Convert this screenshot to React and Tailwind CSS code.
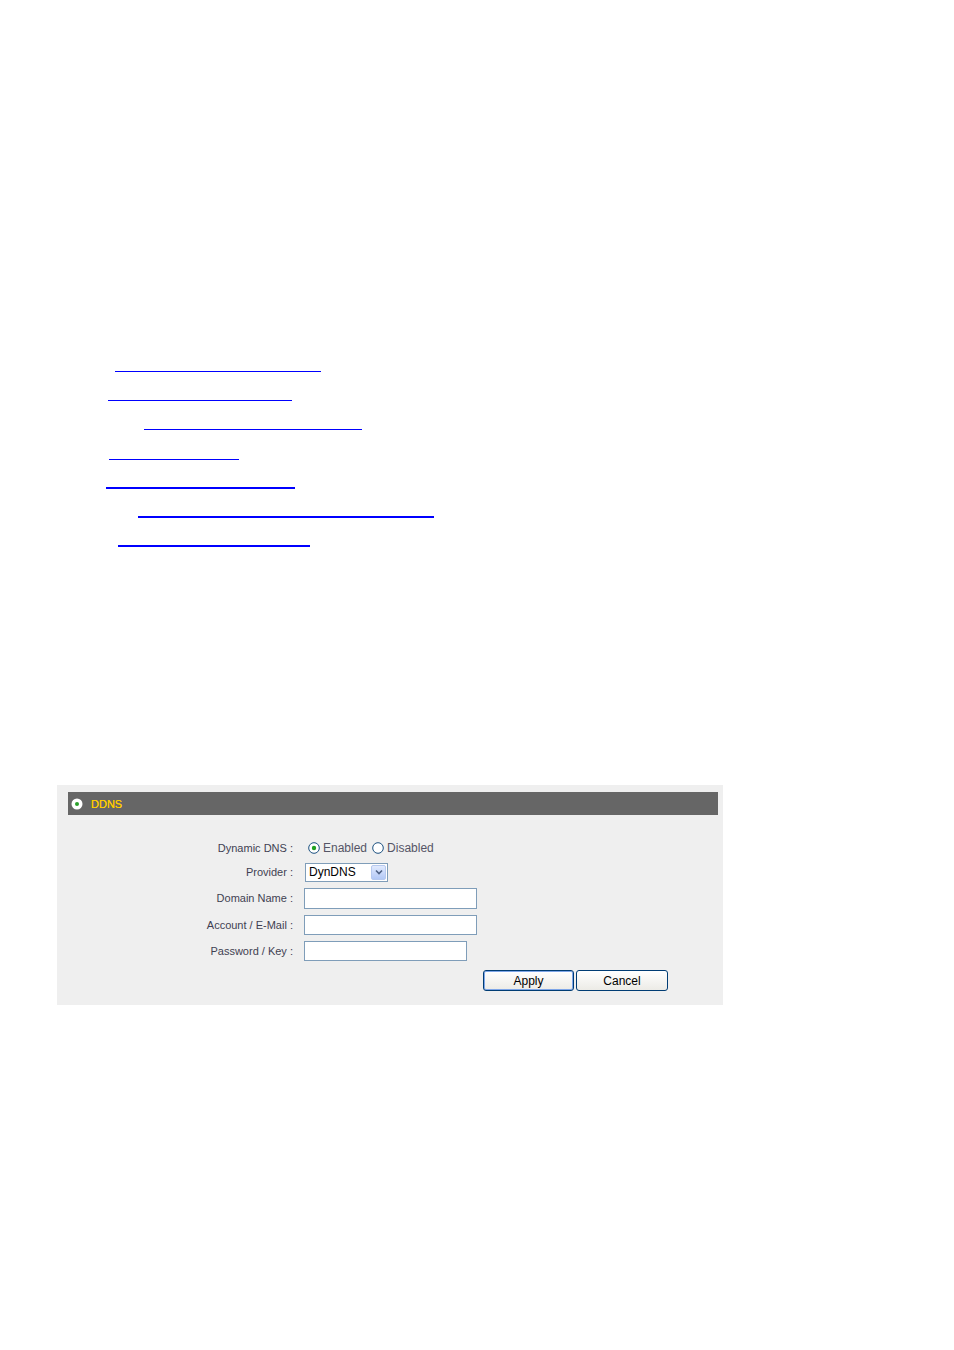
import React from "react";

const lines = [
  { ml: "ml-[115px]", w: "w-[206px]", mt: "mt-[371px]", h: "h-px" },
  { ml: "ml-[108px]", w: "w-[184px]", mt: "mt-[28px]", h: "h-px" },
  { ml: "ml-[144px]", w: "w-[218px]", mt: "mt-[28px]", h: "h-px" },
  { ml: "ml-[109px]", w: "w-[130px]", mt: "mt-[29px]", h: "h-px" },
  { ml: "ml-[106px]", w: "w-[189px]", mt: "mt-[27px]", h: "h-[2px]" },
  { ml: "ml-[138px]", w: "w-[296px]", mt: "mt-[27px]", h: "h-[2px]" },
  { ml: "ml-[118px]", w: "w-[192px]", mt: "mt-[27px]", h: "h-[2px]" },
];

const Radio = ({ checked }) => (
  <svg width="12" height="12" viewBox="0 0 12 12" className="shrink-0">
    <circle cx="6" cy="6" r="5.3" fill="#fff" stroke="#1c5180" strokeWidth="1" />
    {checked && <circle cx="6" cy="6" r="2.2" fill="#21a121" />}
  </svg>
);

const Row = ({ label, mt, h, children }) => (
  <div className={`flex items-center ${mt} ${h}`}>
    <div className="w-[237px] shrink-0 pr-[1px] text-right text-[11px] text-[#3f3f52]">
      {label}
    </div>
    <div className="ml-[10px] flex items-center">{children}</div>
  </div>
);

const TextBox = ({ w, h }) => (
  <div className={`${w} ${h} border border-[#7f9db9] bg-white`} />
);

export default function App() {
  return (
    <div
      className="w-[954px] h-[1350px] bg-white flex flex-col"
      style={{ fontFamily: '"Liberation Sans", Arial, sans-serif' }}
    >
      {lines.map((l, i) => (
        <div key={i} className={`${l.ml} ${l.w} ${l.mt} ${l.h} bg-[#0000ff]`} />
      ))}

      <div className="ml-[57px] mt-[238px] w-[666px] h-[220px] bg-[#efefef] pt-[7px] pl-[11px] pr-[5px]">
        <div className="h-[23px] bg-[#666666] flex items-center pl-[3px]">
          <svg width="12" height="12" viewBox="0 0 12 12">
            <circle cx="6" cy="6" r="5.5" fill="#fff" />
            <circle cx="6" cy="6" r="2" fill="#2aa02a" />
          </svg>
          <span className="ml-[8px] text-[11px] text-[#ffcc00] leading-none mt-[1px] [text-shadow:0_0_0.4px_#ffcc00]">
            DDNS
          </span>
        </div>

        <div className="-ml-[11px]">
          <Row label="Dynamic DNS :" mt="mt-[23px]" h="h-[20px]">
            <div className="flex items-center text-[12px] text-[#555566] ml-[4px]">
              <Radio checked />
              <span className="ml-[3px]">Enabled</span>
              <span className="ml-[5px]">
                <Radio />
              </span>
              <span className="ml-[3px]">Disabled</span>
            </div>
          </Row>
          <Row label="Provider :" mt="mt-[4px]" h="h-[20px]">
            <div className="ml-[1px] w-[83px] h-[19px] border border-[#7f9db9] bg-white flex items-center justify-between pl-[3px] pr-[1px]">
              <span className="text-[12px] text-black leading-none">DynDNS</span>
              <div className="w-[15px] h-[15px] rounded-[2px] border border-[#b6c9ef] bg-gradient-to-b from-[#e1eafe] to-[#b2c8f6] flex items-center justify-center">
                <svg width="8" height="6" viewBox="0 0 8 6">
                  <path d="M1 1.5 L4 4.5 L7 1.5" fill="none" stroke="#4d6185" strokeWidth="1.6" />
                </svg>
              </div>
            </div>
          </Row>
          <Row label="Domain Name :" mt="mt-[6px]" h="h-[21px]">
            <TextBox w="w-[173px]" h="h-[21px]" />
          </Row>
          <Row label="Account / E-Mail :" mt="mt-[6px]" h="h-[20px]">
            <TextBox w="w-[173px]" h="h-[20px]" />
          </Row>
          <Row label="Password / Key :" mt="mt-[6px]" h="h-[20px]">
            <TextBox w="w-[163px]" h="h-[20px]" />
          </Row>

          <div className="mt-[9px] flex ml-[426px] gap-[2px]">
            <button className="w-[91px] h-[21px] rounded-[3px] border border-[#003c74] bg-gradient-to-b from-white to-[#ecebe6] text-[12px] text-black shadow-[inset_0_0_0_1px_#7ea6e8] leading-none">
              Apply
            </button>
            <button className="w-[92px] h-[21px] rounded-[3px] border border-[#003c74] bg-gradient-to-b from-white to-[#ecebe6] text-[12px] text-black leading-none">
              Cancel
            </button>
          </div>
        </div>
      </div>
    </div>
  );
}
